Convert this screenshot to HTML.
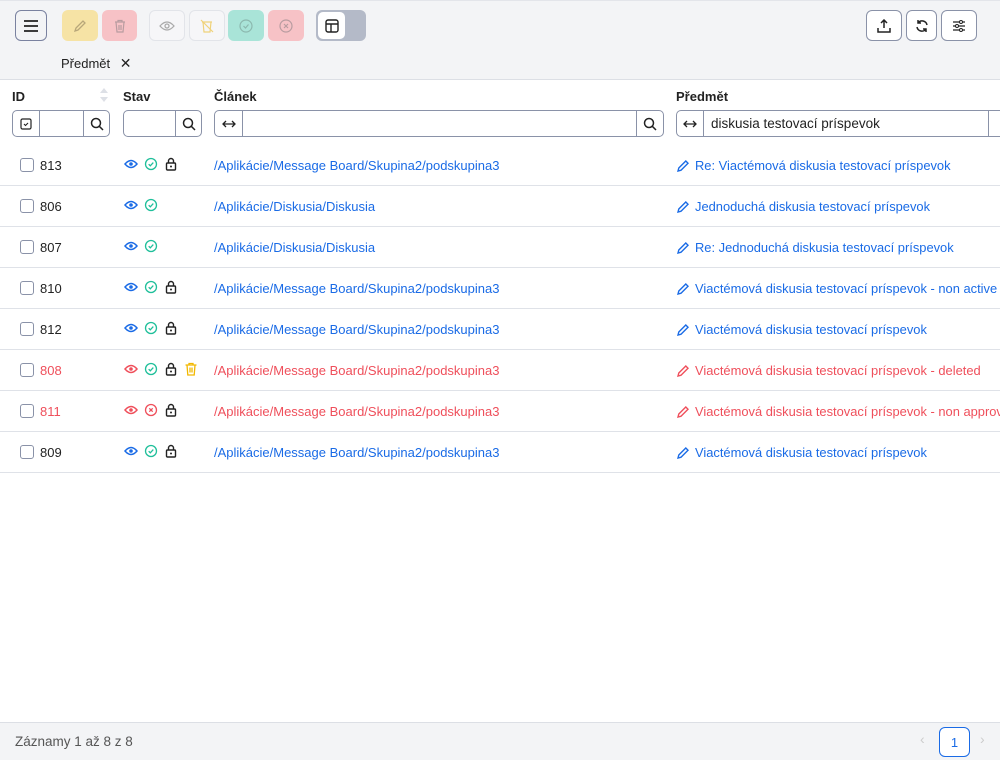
<!DOCTYPE html>
<html><head><meta charset="utf-8"><style>
*{box-sizing:border-box;margin:0;padding:0}
body{width:1000px;height:760px;overflow:hidden;font-family:"Liberation Sans",sans-serif;font-size:13px;color:#222;background:#fff;position:relative}
.top{position:absolute;left:0;top:0;width:1000px;height:80px;background:#f3f4f6;border-bottom:1px solid #dcdfe5;border-top:1px solid #e3e5ea}
.b{position:absolute;top:9px;height:31px;border-radius:6px;display:flex;align-items:center;justify-content:center}
.abs{position:absolute}
.hd{position:absolute;top:89px;font-weight:bold;font-size:13px}
.in{position:absolute;top:110px;height:27px;border:1px solid #8a92a8;border-radius:5px;background:#fff;display:flex}
.in .c{border-right:1px solid #8a92a8;display:flex;align-items:center;justify-content:center}
.row{position:absolute;left:0;width:1000px;height:41px;border-bottom:1px solid #dfe2e8}
.row .cb{position:absolute;left:20px;top:13px;width:14px;height:14px;border:1.5px solid #8a92a8;border-radius:3px}
.row .id{position:absolute;left:40px;top:13px}
.row .ic{position:absolute;left:124px;top:12px;display:flex;gap:6px}
.row .a{position:absolute;left:214px;top:13px;color:#1a6be6;font-size:13px}
.row .p{position:absolute;left:676px;top:13px;color:#1a6be6;font-size:12.9px;white-space:nowrap;display:flex;gap:5px;align-items:center}
.red .a,.red .p,.red .id{color:#ef4f5b}
.foot{position:absolute;left:0;top:722px;width:1000px;height:38px;background:#f3f4f6;border-top:1px solid #dcdfe5}
</style></head><body>
<div class="top">
 <div class="b" style="left:15px;width:32px;border:1px solid #7a82a0;background:#f3f4f6"><svg width="16" height="14"><path d="M1 2h14M1 7h14M1 12h14" stroke="#222" stroke-width="1.8"/></svg></div>
 <div class="b" style="left:62px;width:36px;background:#f6e3a5"><svg width="14" height="14"><path d="M2 12l1-3 7-7 2 2-7 7z" fill="none" stroke="#b8a77a" stroke-width="1.3"/></svg></div>
 <div class="b" style="left:102px;width:35px;background:#f7c2c6"><svg width="14" height="14"><path d="M2 3h10M5 3V1.5h4V3M3 3l1 10h6l1-10M6 6v5M8 6v5" fill="none" stroke="#b89ca0" stroke-width="1.2"/></svg></div>
 <div class="b" style="left:149px;width:36px;background:#f6f6f8;border:1px solid #e2e4e9"><svg width="16" height="12"><path d="M1 6q7-8 14 0q-7 8-14 0z" fill="none" stroke="#aaa" stroke-width="1.3"/><circle cx="8" cy="6" r="2" fill="none" stroke="#aaa" stroke-width="1.3"/></svg></div>
 <div class="b" style="left:189px;width:36px;background:#f6f6f8;border:1px solid #e2e4e9"><svg width="14" height="14"><path d="M2 3h10M3 3l1 10h6l1-10M1 1l12 12" fill="none" stroke="#efd27a" stroke-width="1.2"/></svg></div>
 <div class="b" style="left:228px;width:36px;background:#a9e4d8"><svg width="14" height="14"><circle cx="7" cy="7" r="6" fill="none" stroke="#8cb8ae" stroke-width="1.2"/><path d="M4.5 7l2 2 3-3.5" fill="none" stroke="#8cb8ae" stroke-width="1.2"/></svg></div>
 <div class="b" style="left:268px;width:36px;background:#f7c2c6"><svg width="14" height="14"><circle cx="7" cy="7" r="6" fill="none" stroke="#b89ca0" stroke-width="1.2"/><path d="M5 5l4 4M9 5l-4 4" stroke="#b89ca0" stroke-width="1.2"/></svg></div>
 <div class="b" style="left:316px;width:50px;background:#b4bac8;justify-content:flex-start;padding-left:2px"><div style="width:27px;height:27px;background:#fff;border-radius:5px;display:flex;align-items:center;justify-content:center"><svg width="14" height="14"><rect x="1" y="1" width="12" height="12" rx="2" fill="none" stroke="#222" stroke-width="1.4"/><path d="M1 5h12M6 5v8" stroke="#222" stroke-width="1.4"/></svg></div></div>
 <div class="b" style="left:866px;width:36px;background:#fff;border:1px solid #8a92a8"><svg width="14" height="14"><path d="M7 9V1M4 4l3-3 3 3M1 9v4h12V9" fill="none" stroke="#222" stroke-width="1.5"/></svg></div>
 <div class="b" style="left:906px;width:31px;background:#fff;border:1px solid #8a92a8"><svg width="14" height="14"><path d="M12 6A5 5 0 0 0 3 4M2 8a5 5 0 0 0 9 2M3 1v3h3M11 13v-3H8" fill="none" stroke="#222" stroke-width="1.5"/></svg></div>
 <div class="b" style="left:941px;width:36px;background:#fff;border:1px solid #8a92a8"><svg width="14" height="14"><path d="M1 3h12M1 7h12M1 11h12" stroke="#222" stroke-width="1.3"/><circle cx="9" cy="3" r="1.5" fill="#fff" stroke="#222"/><circle cx="5" cy="7" r="1.5" fill="#fff" stroke="#222"/><circle cx="9" cy="11" r="1.5" fill="#fff" stroke="#222"/></svg></div>
 <div class="abs" style="left:61px;top:54px;font-size:13px">Předmět <span style="margin-left:6px;font-size:14px">✕</span></div>
</div>
<div class="hd" style="left:12px">ID</div>
<svg class="abs" style="left:99px;top:87px" width="10" height="16"><path d="M1 6l4-5 4 5zM1 10l4 5 4-5z" fill="#dde0e6"/></svg>
<div class="hd" style="left:123px">Stav</div>
<div class="hd" style="left:214px">Článek</div>
<div class="hd" style="left:676px">Předmět</div>
<svg width="0" height="0" style="position:absolute"><defs>
<g id="eye"><path d="M1 7q6-7 12 0q-6 7-12 0z" fill="none" stroke="currentColor" stroke-width="1.5"/><circle cx="7" cy="7" r="1.8" fill="currentColor"/></g>
<g id="ok"><circle cx="7" cy="7" r="5.5" fill="none" stroke="#1fbf9a" stroke-width="1.3"/><path d="M4.7 7.2l1.6 1.6 3-3.2" fill="none" stroke="#1fbf9a" stroke-width="1.3"/></g>
<g id="no"><circle cx="7" cy="7" r="5.5" fill="none" stroke="#ef4f5b" stroke-width="1.3"/><path d="M5.3 5.3l3.4 3.4M8.7 5.3l-3.4 3.4" stroke="#ef4f5b" stroke-width="1.3"/></g>
<g id="lk"><rect x="2.5" y="6" width="9" height="7" rx="1" fill="none" stroke="#222" stroke-width="1.4"/><path d="M4.5 6V4a2.5 2.5 0 0 1 5 0v2" fill="none" stroke="#222" stroke-width="1.4"/><circle cx="7" cy="9.5" r="1" fill="#222"/></g>
<g id="tr"><path d="M1.5 3h11M5 3V1.5h4V3M3 3l.8 10h6.4L11 3M6 5.5v5M8 5.5v5" fill="none" stroke="#f2b800" stroke-width="1.3"/></g>
<g id="pen"><path d="M2 12l.8-3 7-7 2.2 2.2-7 7z" fill="none" stroke="currentColor" stroke-width="1.4"/></g>
<g id="ar"><path d="M1 6h12M4 3L1 6l3 3M10 3l3 3-3 3" fill="none" stroke="#222" stroke-width="1.3"/></g>
<g id="sr"><circle cx="6" cy="6" r="4.5" fill="none" stroke="#222" stroke-width="1.5"/><path d="M9.3 9.3L13 13" stroke="#222" stroke-width="1.5"/></g>
</defs></svg>
<div class="in" style="left:12px;width:98px"><div class="c" style="width:27px"><svg width="12" height="12"><rect x="1" y="1" width="10" height="10" rx="1.5" fill="none" stroke="#222" stroke-width="1.2"/><path d="M4 6l1.5 1.5L8 5" fill="none" stroke="#222" stroke-width="1.1"/></svg></div><div style="flex:1;border-right:1px solid #8a92a8"></div><div style="width:25px;display:flex;align-items:center;justify-content:center"><svg width="14" height="14"><use href="#sr"/></svg></div></div>
<div class="in" style="left:123px;width:79px"><div style="flex:1;border-right:1px solid #8a92a8"></div><div style="width:25px;display:flex;align-items:center;justify-content:center"><svg width="14" height="14"><use href="#sr"/></svg></div></div>
<div class="in" style="left:214px;width:450px"><div class="c" style="width:28px"><svg width="14" height="12"><use href="#ar"/></svg></div><div style="flex:1;border-right:1px solid #8a92a8"></div><div style="width:26px;display:flex;align-items:center;justify-content:center"><svg width="14" height="14"><use href="#sr"/></svg></div></div>
<div class="in" style="left:676px;width:340px"><div class="c" style="width:27px"><svg width="14" height="12"><use href="#ar"/></svg></div><div style="flex:1;border-right:1px solid #8a92a8;padding:5px 7px;font-size:13.5px">diskusia testovací príspevok</div><div style="width:26px"></div></div>
<div id="rows"></div>
<script>
const d=[["813",0,0,1,0,"/Aplikácie/Message Board/Skupina2/podskupina3","Re: Viactémová diskusia testovací príspevok"],
["806",0,0,0,0,"/Aplikácie/Diskusia/Diskusia","Jednoduchá diskusia testovací príspevok"],
["807",0,0,0,0,"/Aplikácie/Diskusia/Diskusia","Re: Jednoduchá diskusia testovací príspevok"],
["810",0,0,1,0,"/Aplikácie/Message Board/Skupina2/podskupina3","Viactémová diskusia testovací príspevok - non active"],
["812",0,0,1,0,"/Aplikácie/Message Board/Skupina2/podskupina3","Viactémová diskusia testovací príspevok"],
["808",1,0,1,1,"/Aplikácie/Message Board/Skupina2/podskupina3","Viactémová diskusia testovací príspevok - deleted"],
["811",1,1,1,0,"/Aplikácie/Message Board/Skupina2/podskupina3","Viactémová diskusia testovací príspevok - non approved"],
["809",0,0,1,0,"/Aplikácie/Message Board/Skupina2/podskupina3","Viactémová diskusia testovací príspevok"]];
let h="";const s=n=>`<svg width="14" height="14"><use href="#${n}"/></svg>`;
d.forEach((r,i)=>{const red=r[1];h+=`<div class="row ${red?'red':''}" style="top:${145+i*41}px"><div class="cb"></div><div class="id">${r[0]}</div><div class="ic"><span style="color:${red?'#ef4f5b':'#1a6be6'};display:flex">${s('eye')}</span>${s(r[2]?'no':'ok')}${r[3]?s('lk'):''}${r[4]?s('tr'):''}</div><div class="a">${r[5]}</div><div class="p"><span style="display:flex">${s('pen')}</span>${r[6]}</div></div>`});
document.getElementById('rows').innerHTML=h;
</script>
<div class="foot">
 <div class="abs" style="left:15px;top:11px;color:#555;font-size:13.5px">Záznamy 1 až 8 z 8</div>
 <div class="abs" style="left:920px;top:8px;color:#ccc;font-size:14px">‹</div>
 <div class="abs" style="left:939px;top:4px;width:31px;height:30px;border:1.5px solid #1a6be6;border-radius:6px;color:#1a6be6;display:flex;align-items:center;justify-content:center;background:#fff;font-size:13px">1</div>
 <div class="abs" style="left:980px;top:8px;color:#ccc;font-size:14px">›</div>
</div>
</body></html>
